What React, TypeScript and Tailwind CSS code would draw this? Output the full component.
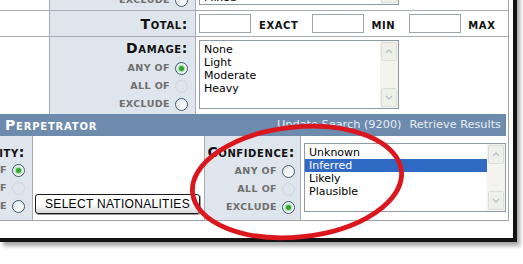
import React from "react";

type RadioState = "on" | "off" | "disabled";

const Radio = ({ state }: { state: RadioState }) => {
	if (state === "disabled") {
		return <span className="w-[13px] h-[13px] rounded-full border border-[#cfd5db] shrink-0" />;
	}
	return (
		<span className="w-[13px] h-[13px] rounded-full border border-[#3d5872] bg-gradient-to-br from-[#e4e8ec] to-white flex items-center justify-center shrink-0">
			{state === "on" && <span className="w-[5px] h-[5px] rounded-full bg-[#30a830] shadow-[0_0_1px_1px_#9fdc9a]" />}
		</span>
	);
};

const RadioRow = ({ text, state }: { text: string; state: RadioState }) => (
	<div className="h-[18px] flex items-center justify-end gap-[5px] whitespace-nowrap">
		<span className="text-[9.5px] font-bold uppercase text-[#6e6e6e] tracking-[0.4px]">{text}</span>
		<Radio state={state} />
	</div>
);

const ScrollArrow = ({ up }: { up?: boolean }) => (
	<div className="h-[19px] bg-[#eef0ea] border border-[#dcdfd8] rounded-[2px] flex items-center justify-center">
		<svg width="8" height="5" viewBox="0 0 8 5">
			<path d={up ? "M1 4 L4 1 L7 4" : "M1 1 L4 4 L7 1"} stroke="#b9c0c7" strokeWidth="1.4" fill="none" />
		</svg>
	</div>
);

const ListBox = ({ items, selected, className }: { items: string[]; selected?: string; className: string }) => (
	<div className={`h-[69px] border border-[#8e9aa6] bg-white flex ${className}`}>
		<div className="flex-1 pt-[2px] text-[11px] leading-[13px] text-black">
			{items.map((it, i) => (
				<div key={i} className={it === selected ? "h-[13px] bg-[#316ac5] text-white pl-[4px]" : "h-[13px] pl-[4px]"}>
					{it}
				</div>
			))}
		</div>
		<div className="w-[18px] bg-[#f4f3ee] flex flex-col justify-between p-[1px]">
			<ScrollArrow up />
			<ScrollArrow />
		</div>
	</div>
);

const Title = ({ text }: { text: string }) => (
	<div className="h-[16px] leading-[16px] text-[14px] font-bold tracking-[0.6px] [font-variant:small-caps] whitespace-nowrap text-[#111]">
		{text}
	</div>
);

const GroupRow = ({
	title,
	labels,
	items,
	checked,
}: {
	title?: string;
	labels: string[];
	items: string[];
	checked: RadioState[];
}) => (
	<div className="flex h-[77px]">
		<div className="w-[50px] border-r border-[#a8adb3]" />
		<div className="w-[146px] bg-[#dfe5ec] border-r border-[#a8adb3] pr-[7px] pt-[3px] flex flex-col items-end">
			<div className="h-[16px]">{title && <Title text={title} />}</div>
			<div className="mt-[3px]">
				<RadioRow text={labels[0]} state={checked[0]} />
				<RadioRow text={labels[1]} state={checked[1]} />
				<RadioRow text={labels[2]} state={checked[2]} />
			</div>
		</div>
		<div className="pl-[3px] pt-[3px]">
			<ListBox items={items} className="w-[200px]" />
		</div>
	</div>
);

const SmallInput = () => <div className="w-[52px] h-[19px] border border-[#9aa6b2] bg-white" />;

const Unit = ({ text }: { text: string }) => (
	<span className="text-[10px] font-bold tracking-[0.6px] text-[#111]">{text}</span>
);

export default function App() {
	return (
		<div className="relative w-[523px] h-[264px] overflow-hidden bg-white font-['DejaVu_Sans',Verdana,sans-serif]">
			<div className="w-[517px] pr-[4px] pb-[17px] border-r-[4px] border-b-[4px] border-[#141414] shadow-[3px_4px_4px_rgba(0,0,0,0.35)] bg-white">
				<div className="w-[509px] mt-[-67px] border-r border-b border-[#a0a5aa]">
					{/* previous group, only its bottom edge shows */}
					<GroupRow labels={["", "", "exclude"]} items={["", "", "", "", "Mixed"]} checked={["on", "disabled", "off"]} />

					<div className="flex h-[27px] border-t border-b border-[#a8adb3]">
						<div className="w-[50px] border-r border-[#a8adb3]" />
						<div className="w-[146px] bg-[#dfe5ec] border-r border-[#a8adb3] pr-[7px] flex items-center justify-end">
							<Title text="Total:" />
						</div>
						<div className="flex items-center pl-[3px]">
							<SmallInput />
							<span className="ml-[8px] mr-[14px]"><Unit text="EXACT" /></span>
							<SmallInput />
							<span className="ml-[7px] mr-[14px]"><Unit text="MIN" /></span>
							<SmallInput />
							<span className="ml-[7px]"><Unit text="MAX" /></span>
						</div>
					</div>

					<GroupRow
						title="Damage:"
						labels={["any of", "all of", "exclude"]}
						items={["None", "Light", "Moderate", "Heavy"]}
						checked={["on", "disabled", "off"]}
					/>

					<div className="h-[22px] bg-[#6d8bac] flex items-center justify-between pl-[5px] pr-[5px] mr-[2px]">
						<span className="text-[14px] font-bold tracking-[0.8px] [font-variant:small-caps] text-white">Perpetrator</span>
						<div className="flex gap-[8px] text-[11.3px] text-[#e6edf4]">
							<span>Update Search (9200)</span>
							<span>Retrieve Results</span>
						</div>
					</div>

					<div className="flex h-[84px]">
						<div className="w-[33px] bg-[#dfe5ec] border-r border-[#a8adb3] pr-[7px] pt-[8px] flex flex-col items-end overflow-hidden">
							<div className="w-full flex justify-end">
								<Title text="Nationality:" />
							</div>
							<div className="mt-[1px] w-full flex flex-col items-end">
								<RadioRow text="any of" state="on" />
								<RadioRow text="all of" state="disabled" />
								<RadioRow text="exclude" state="off" />
							</div>
						</div>
						<div className="w-[171px] flex items-end pl-[2px] pb-[6px]">
							<button className="w-[165px] h-[20px] rounded-[3px] border border-[#1a1a1a] bg-gradient-to-b from-white via-white to-[#d8d8d8] shadow-[1px_1px_0_#9a9a9a] font-['Liberation_Sans',Arial,sans-serif] text-[12px] tracking-[0.3px] text-black">
								SELECT NATIONALITIES
							</button>
						</div>
						<div className="w-[97px] bg-[#dfe5ec] border-l border-r border-[#a8adb3] pr-[5px] pt-[8px] flex flex-col items-end">
							<Title text="Confidence:" />
							<div className="mt-[2px]">
								<RadioRow text="any of" state="off" />
								<RadioRow text="all of" state="disabled" />
								<RadioRow text="exclude" state="on" />
							</div>
						</div>
						<div className="pl-[3px] pt-[7px]">
							<ListBox items={["Unknown", "Inferred", "Likely", "Plausible"]} selected="Inferred" className="w-[202px]" />
						</div>
					</div>
				</div>
			</div>

			{/* hand-drawn red circle around the confidence filter */}
			<svg className="absolute left-0 top-0 pointer-events-none" width="523" height="264">
				<ellipse cx="297" cy="182" rx="105" ry="55" transform="rotate(-6 297 182)" fill="none" stroke="#dc161d" strokeWidth="4.8" />
			</svg>
		</div>
	);
}
